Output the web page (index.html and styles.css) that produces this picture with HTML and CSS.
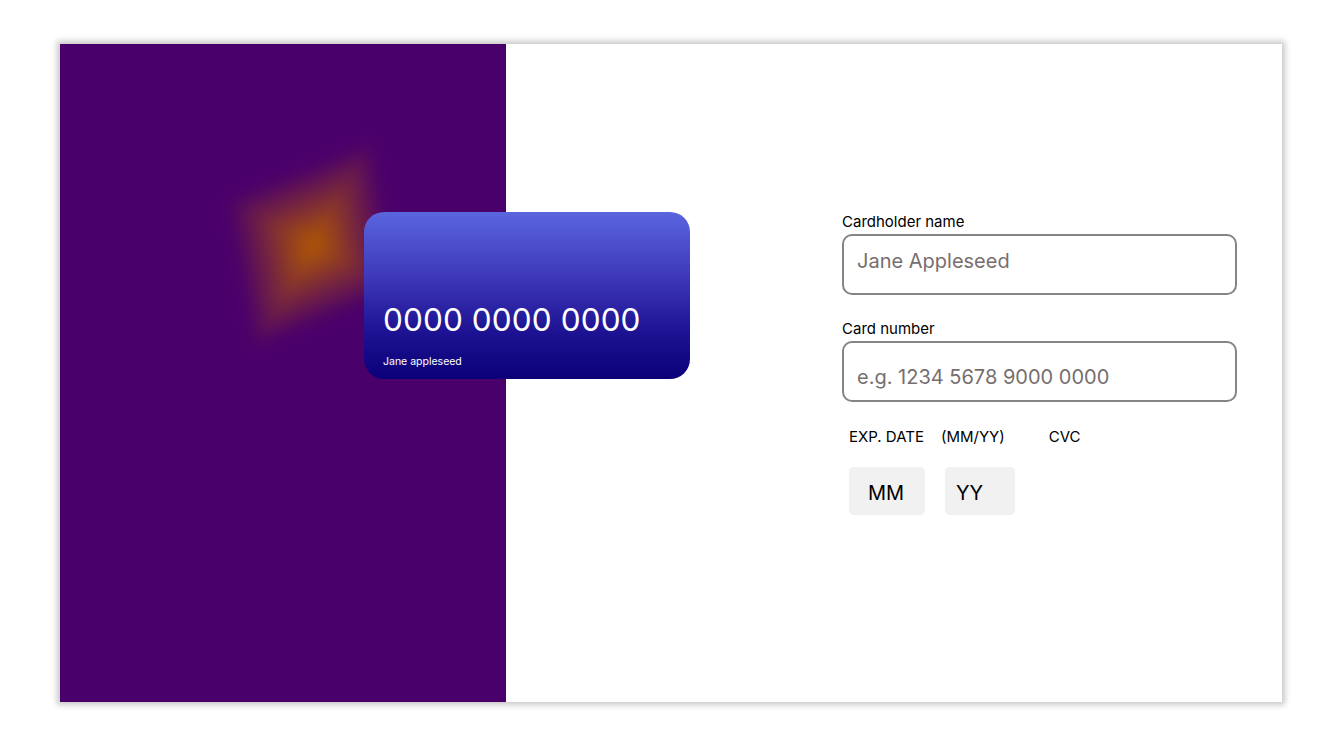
FILE: index.html
```html
<!DOCTYPE html>
<html>
<head>
<meta charset="utf-8">
<link rel="stylesheet" href="styles.css">
</head>
<body>
<main class="frame">
  <section class="side">
    <div class="glow">
      <div class="tri tri-top"></div>
      <div class="tri tri-right"></div>
      <div class="tri tri-bottom"></div>
      <div class="tri tri-left"></div>
    </div>
  </section>
  <div class="card">
    <div class="card-number">0000 0000 0000</div>
    <div class="card-name">Jane appleseed</div>
  </div>
  <section class="content">
    <form class="form">
      <label class="label">Cardholder name</label>
      <div class="field field-name"><span class="placeholder">Jane Appleseed</span></div>
      <label class="label label-gap">Card number</label>
      <div class="field field-number"><span class="placeholder">e.g. 1234 5678 9000 0000</span></div>
      <div class="exp-row">
        <span class="exp">EXP. DATE</span>
        <span class="mmyy">(MM/YY)</span>
        <span class="cvc">CVC</span>
      </div>
      <div class="date-row">
        <div class="small-box mm">MM</div>
        <div class="small-box yy">YY</div>
      </div>
    </form>
  </section>
</main>
</body>
</html>
```
FILE: styles.css
```css
* { box-sizing: border-box; }
html, body { margin: 0; padding: 0; background: #fff; }
body {
  font-family: Inter, "Noto Sans", sans-serif;
  padding: 44px 60px 37px 60px;
}
.frame {
  position: relative;
  display: flex;
  width: 1222px;
  height: 658px;
  background: #fff;
  box-shadow: 0 0 6px 3px #c8c8c8;
}
.side {
  position: relative;
  width: 446px;
  background: #4a006a;
  overflow: hidden;
}
.glow {
  position: absolute;
  left: 203px;
  top: 151px;
  width: 100px;
  height: 100px;
  transform: matrix(1.4, -0.57, 0.26, 1.43, 0, 0);
  filter: blur(5px);
}
.tri {
  position: absolute;
  inset: 0;
}
.tri-top {
  clip-path: polygon(0 0, 100% 0, 50% 50%);
  background: linear-gradient(to bottom, rgba(179, 90, 0, 0.06) 0%, rgba(179, 90, 0, 0.45) 22%, #b35a00 50%);
}
.tri-bottom {
  clip-path: polygon(0 100%, 100% 100%, 50% 50%);
  background: linear-gradient(to top, rgba(179, 90, 0, 0.06) 0%, rgba(179, 90, 0, 0.45) 22%, #b35a00 50%);
}
.tri-left {
  clip-path: polygon(0 0, 0 100%, 50% 50%);
  background: linear-gradient(to right, rgba(179, 90, 0, 0.06) 0%, rgba(179, 90, 0, 0.45) 22%, #b35a00 50%);
}
.tri-right {
  clip-path: polygon(100% 0, 100% 100%, 50% 50%);
  background: linear-gradient(to left, rgba(179, 90, 0, 0.06) 0%, rgba(179, 90, 0, 0.45) 22%, #b35a00 50%);
}
.card {
  position: absolute;
  left: 304px;
  top: 168px;
  width: 326px;
  height: 167px;
  border-radius: 20px;
  background: linear-gradient(180deg, #5a65de 0%, #3d37b8 40%, #1e1494 70%, #0b0078 100%);
  color: #fff;
  padding: 88px 0 0 19px;
}
.card-number {
  font-size: 31.5px;
  line-height: 40px;
  letter-spacing: 0.1px;
}
.card-name {
  font-size: 10.5px;
  margin-top: 15px;
  line-height: 13px;
}
.content {
  flex: 1;
  padding: 169px 0 0 336px;
}
.form {
  width: 395px;
  display: flex;
  flex-direction: column;
}
.label {
  font-size: 15px;
  line-height: 18px;
  color: #000;
  margin-bottom: 3px;
}
.label-gap { margin-top: 25px; }
.field {
  height: 61px;
  border: 2px solid #858585;
  border-radius: 10px;
  padding-left: 13px;
  display: flex;
  align-items: center;
}
.field-name { padding-bottom: 8px; }
.field-number { padding-top: 10px; }
.placeholder {
  font-size: 20px;
  color: #776e6e;
}
.exp-row {
  display: flex;
  font-size: 15px;
  line-height: 18px;
  margin: 26px 0 0 7px;
}
.mmyy { margin-left: 17px; }
.cvc { margin-left: 44px; }
.date-row {
  display: flex;
  gap: 20px;
  margin: 21px 0 0 7px;
}
.small-box {
  height: 48px;
  background: #f1f1f1;
  border-radius: 5px;
  font-size: 20px;
  display: flex;
  align-items: center;
  padding-top: 3px;
}
.mm { width: 76px; padding-left: 19px; }
.yy { width: 70px; padding-left: 11px; }
```
